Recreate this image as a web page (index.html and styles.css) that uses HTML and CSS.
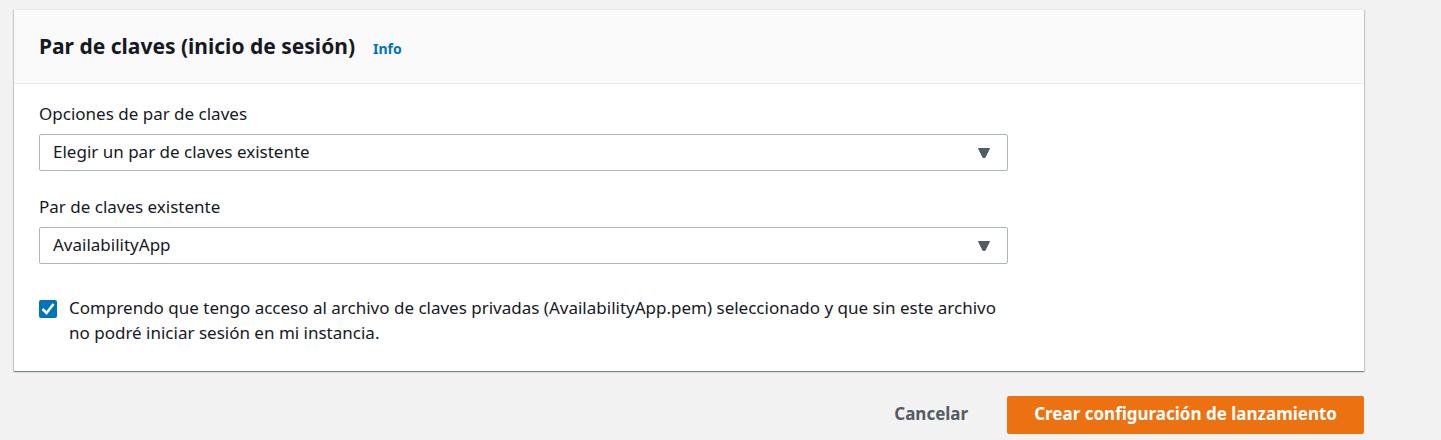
FILE: index.html
```html
<!DOCTYPE html>
<html lang="es">
<head>
<meta charset="utf-8">
<meta name="viewport" content="width=device-width, initial-scale=1">
<title>Crear configuración de lanzamiento</title>
<link rel="stylesheet" href="styles.css">
</head>
<body>
<form class="page">
  <section class="card">
    <header class="card-header">
      <h2 class="card-title">Par de claves (inicio de sesión)</h2>
      <a class="info-link" href="#">Info</a>
    </header>
    <div class="card-body">
      <div class="field">
        <label class="field-label" for="key-options">Opciones de par de claves</label>
        <div class="select">
          <select class="select-input" id="key-options">
            <option>Elegir un par de claves existente</option>
          </select>
          <svg class="select-arrow" viewBox="0 0 14 12" aria-hidden="true"><path d="M1.500 1.500h11L8 10.500H6z"/></svg>
        </div>
      </div>
      <div class="field">
        <label class="field-label" for="key-pair">Par de claves existente</label>
        <div class="select">
          <select class="select-input" id="key-pair">
            <option>AvailabilityApp</option>
          </select>
          <svg class="select-arrow" viewBox="0 0 14 12" aria-hidden="true"><path d="M1.500 1.500h11L8 10.500H6z"/></svg>
        </div>
      </div>
      <div class="confirm">
        <span class="checkbox">
          <input class="checkbox-input" type="checkbox" id="confirm" checked>
          <svg class="checkbox-mark" viewBox="0 0 18 18" aria-hidden="true"><path d="M3.500 9l4 4 7-9"/></svg>
        </span>
        <label class="confirm-label" for="confirm">Comprendo que tengo acceso al archivo de claves privadas (AvailabilityApp.pem) seleccionado y que sin este archivo no podré iniciar sesión en mi instancia.</label>
      </div>
    </div>
  </section>
  <div class="actions">
    <button class="button" type="button">Cancelar</button>
    <button class="button button-primary" type="submit">Crear configuración de lanzamiento</button>
  </div>
</form>
</body>
</html>
```
FILE: styles.css
```css
* {
  box-sizing: border-box;
}

body {
  margin: 0;
  background: #f2f2f2;
  color: #16191f;
  font: 17px/25px "Noto Sans", sans-serif;
}

.page {
  padding: 9px 77px 6px 14px;
}

.card {
  background: #fff;
  border-top: 1px solid #eaeded;
  box-shadow: 0 1px 1px 0 rgba(0, 28, 36, 0.3), 1px 1px 1px 0 rgba(0, 28, 36, 0.15), -1px 1px 1px 0 rgba(0, 28, 36, 0.15);
}

.card-header {
  display: flex;
  align-items: baseline;
  gap: 18px;
  padding: 20px 25px 21px;
  background: #fafafa;
  border-bottom: 1px solid #eaeded;
}

.card-title {
  margin: 0;
  font-size: 21px;
  line-height: 32px;
  font-weight: 700;
}

.info-link {
  color: #0073bb;
  font-size: 14px;
  font-weight: 700;
  text-decoration: none;
}

.card-body {
  display: flex;
  flex-direction: column;
  gap: 23px;
  max-width: 1019px;
  padding: 17px 25px 26px;
}

.field {
  display: flex;
  flex-direction: column;
  gap: 8px;
}

.select {
  display: grid;
  align-items: center;
}

.select-input {
  grid-area: 1 / 1;
  appearance: none;
  width: 100%;
  height: 37px;
  padding: 0 40px 2px 13px;
  border: 1px solid #aab7b8;
  border-radius: 2px;
  background: #fff;
  color: inherit;
  font: inherit;
}

.select-arrow {
  grid-area: 1 / 1;
  justify-self: end;
  width: 14px;
  height: 12px;
  margin-right: 17px;
  fill: #545b64;
  stroke: #545b64;
  stroke-linejoin: round;
  pointer-events: none;
}

.confirm {
  display: flex;
  align-items: flex-start;
  gap: 12px;
  padding-top: 8px;
}

.checkbox {
  display: grid;
  flex: none;
  padding-top: 5px;
}

.checkbox-input {
  grid-area: 1 / 1;
  appearance: none;
  width: 18px;
  height: 18px;
  margin: 0;
  border-radius: 2px;
  background: #0073bb;
}

.checkbox-mark {
  grid-area: 1 / 1;
  width: 18px;
  height: 18px;
  fill: none;
  stroke: #fff;
  stroke-width: 2.500;
  pointer-events: none;
}

.checkbox-input:not(:checked) {
  border: 1px solid #687078;
  background: #fff;
}

.actions {
  display: flex;
  justify-content: flex-end;
  gap: 12px;
  padding-top: 25px;
}

.button {
  height: 38px;
  padding: 0 27px 3px;
  border: 0;
  border-radius: 2px;
  background: transparent;
  color: #545b64;
  font: inherit;
  font-weight: 700;
}

.button-primary {
  background: #ec7211;
  color: #fff;
}
```
